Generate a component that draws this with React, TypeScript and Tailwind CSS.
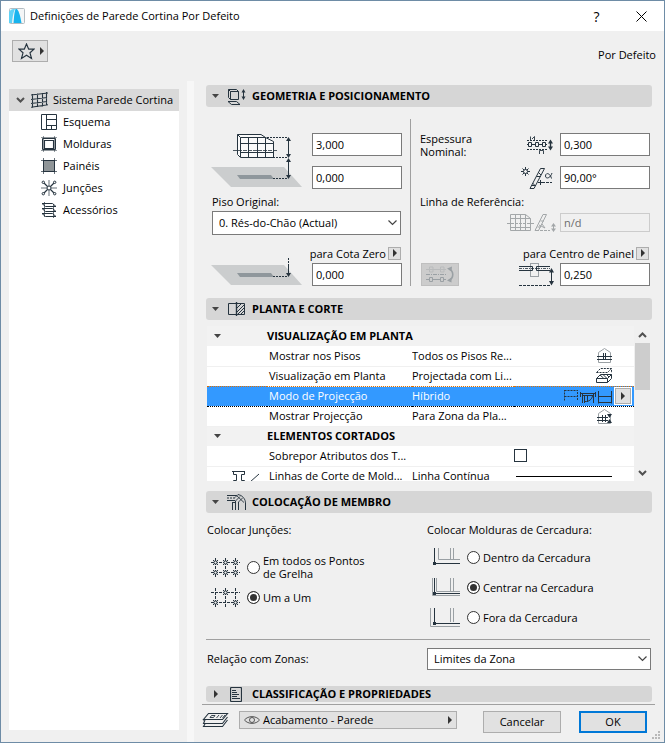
import React from "react";

const INK = "#26343f";
const GREY = "#9aa0a4";

type SvgProps = {
  w: number;
  h: number;
  color?: string;
  className?: string;
  children: React.ReactNode;
};

function Glyph({ w, h, color = INK, className = "", children }: SvgProps) {
  return (
    <svg
      width={w}
      height={h}
      viewBox={`0 0 ${w} ${h}`}
      fill="none"
      stroke={color}
      strokeWidth={1}
      aria-hidden="true"
      className={`shrink-0 ${className}`}
    >
      {children}
    </svg>
  );
}

/* ---------- small shared marks ---------- */

const ArrowRight = () => (
  <Glyph w={4} h={8} className="inline-block">
    <path d="M0 0L4 4L0 8Z" fill="#333" stroke="none" />
  </Glyph>
);

const ArrowDown = () => (
  <Glyph w={7} h={4}>
    <path d="M0 0H7L3.500 4Z" fill="#444" stroke="none" />
  </Glyph>
);

const Chevron = ({ up = false }: { up?: boolean }) => (
  <Glyph w={9} h={6}>
    <path d={up ? "M1 5L4.500 1.500L8 5" : "M1 1L4.500 4.500L8 1"} stroke="#505050" strokeWidth={2} />
  </Glyph>
);

/* ---------- tree icons ---------- */

const WallIcon = () => (
  <Glyph w={17} h={16}>
    <path d="M1.500 2V16M6.500 1.500V15M11.500 1V14.500M15.500 0V13.500M0 3L17 1M0 7.500L16 5.500M0 11.500L16 9.500M0 15.200L17 12.700" strokeWidth={1.1} />
  </Glyph>
);

const SchemeIcon = () => (
  <Glyph w={16} h={16}>
    <path d="M.5 .5H15.500V15.500H.5ZM5.500 0V16M5.500 5.500H15.500M5.500 11.500H15.500M10.500 11.500V16" />
  </Glyph>
);

const FrameIcon = () => (
  <Glyph w={16} h={16}>
    <path d="M1.500 2.500H14.500V13.500H1.500Z" />
    <path d="M3.500 4.500H12.500V12.500H3.500Z" strokeWidth={1.1} />
    <path d="M2.500 0V16M13.500 0V16M0 1.500H16M0 14.500H16" strokeWidth={0.5} />
  </Glyph>
);

const PanelIcon = () => (
  <Glyph w={16} h={16}>
    <rect x="2.500" y="2.500" width="11" height="11" fill="#8f9598" />
    <path d="M2.500 0V16M13.500 0V16M0 2.500H16M0 13.500H16" strokeWidth={0.7} />
  </Glyph>
);

const JunctionIcon = () => (
  <Glyph w={16} h={16}>
    <path d="M8 0V16M0 8H16" strokeWidth={0.7} />
    <path d="M3 3L13 13M13 3L3 13" strokeWidth={1.2} />
    <circle cx="8" cy="8" r="2" fill="#fff" />
    <circle cx="2.300" cy="2.300" r="1.200" fill="#fff" />
    <circle cx="13.700" cy="2.300" r="1.200" fill="#fff" />
    <circle cx="2.300" cy="13.700" r="1.200" fill="#fff" />
    <circle cx="13.700" cy="13.700" r="1.200" fill="#fff" />
  </Glyph>
);

const AccessoryIcon = () => (
  <Glyph w={16} h={16}>
    <path d="M3.500 0V15M12.500 2V16" strokeWidth={0.7} />
    <path d="M1 1.500H11.500L15 4.500H4.500ZM1 6.500H11.500L15 9.500H4.500ZM1 11.500H11.500L15 14.500H4.500Z" />
  </Glyph>
);

/* ---------- section icons ---------- */

const GeometryIcon = () => (
  <Glyph w={19} h={17}>
    <path d="M1.500 1.500H9.500L11.500 3.500V11.500H3.500L1.500 9.500ZM3.500 11.500V3.500H11.500M1.500 1.500L3.500 3.500" />
    <path d="M1 13.500H9.500L13 16.500H4.500Z" />
    <path d="M16.500 3V10" />
    <path d="M14.500 4.500L16.500 1L18.500 4.500ZM14.500 8.500L16.500 12L18.500 8.500Z" fill={INK} stroke="none" />
  </Glyph>
);

const PlanIcon = () => (
  <Glyph w={18} h={14} className="ml-px">
    <path d="M4.500 1.500H.5V12.500H4.500" />
    <path d="M4 1.500H16.500V12.500H4" />
    <path d="M8.500 0V14" strokeWidth={1.4} />
    <path d="M9 6L13 2M9 10L16 3M10 12L16 6M13 12L16 9" />
  </Glyph>
);

const MemberIcon = () => (
  <Glyph w={19} h={16}>
    <path d="M0 1.500H9M0 6.500H8M5 8.500H9" />
    <path d="M0 4H9" strokeDasharray="2 1" />
    <path d="M5.500 8V16M8.500 7V16M11.500 8V16M18.500 9V16" />
    <path d="M8 3.500L11 .5L14 1.500C17 3.500 18.500 6 18.500 9M8.500 7L13 2.500M11.500 8L15.500 4M9 1L17 8.500" strokeWidth={0.9} />
  </Glyph>
);

const DocIcon = () => (
  <Glyph w={12} h={15} className="ml-[3px]">
    <rect x=".5" y=".5" width="11" height="14" rx="1" strokeWidth={1.200} />
    <path d="M2 3.500H6M2 5.500H7M2 7.500H9M2 9.500H7M2 11.500H10" />
  </Glyph>
);

/* ---------- geometry drawings ---------- */

const FloorPlate = ({ y }: { y: number }) => (
  <g stroke="none">
    <path d={`M0 ${y}H73L91 ${y + 20}H20Z`} fill="#cbcdce" />
    <path d={`M26 ${y + 8}H60L63 ${y + 12}H29Z`} fill="#8f979c" />
  </g>
);

const HeightDrawing = () => (
  <Glyph w={92} h={56}>
    <FloorPlate y={34} />
    <path d="M26.500 1.500H50L54.500 4.500L62.500 8.500V24.500H29.500L26.500 21.500Z" fill="#fafafa" />
    <path d="M29.500 24V4.500H54.500M26.500 1.500L29.500 4.500M37.500 4.500V24M46.500 4.500V24M54.500 4.500V24M29.500 10.500H62M29.500 19.500H62" />
    <path d="M22 17.500H66" strokeDasharray="4 1" strokeWidth={0.8} />
    <path d="M56 4.500H77M62 24.500H77M62 45.500H77" strokeDasharray="2 1" />
    <path d="M77.500 6V24M77.500 27V45" />
    <path d="M75 8L77.500 4L80 8ZM75 21L77.500 25L80 21ZM75 29L77.500 25L80 29ZM75 42L77.500 46L80 42Z" fill={INK} stroke="none" />
  </Glyph>
);

const ZeroDrawing = () => (
  <Glyph w={92} h={28}>
    <FloorPlate y={7} />
    <path d="M62 18.500H76" strokeDasharray="2 1" />
    <path d="M77.500 0V6" strokeDasharray="2 1" />
    <path d="M77.500 6V16" />
    <path d="M75 15L77.500 19L80 15Z" fill={INK} stroke="none" />
  </Glyph>
);

const ThicknessDrawing = () => (
  <Glyph w={27} h={20}>
    <path d="M0 5.500H21M0 14.500H20" strokeDasharray="2 1" />
    <path d="M3.500 5V1.500M5 4L7.500 1.500V5M12.500 19V15.500H16.500V19" strokeWidth={0.9} />
    <path d="M0 9.500H20" />
    <path d="M1.500 7.500H4.500V11.500H1.500ZM8.500 7.500H11.500V11.500H8.500ZM15.500 7.500H18.500V11.500H15.500Z" fill="#f0f0f0" />
    <path d="M23.500 7V13" strokeWidth={1.4} />
    <path d="M21 8.500L23.500 4.500L26 8.500ZM21 11.500L23.500 15.500L26 11.500Z" fill={INK} stroke="none" />
  </Glyph>
);

const AngleDrawing = () => (
  <Glyph w={32} h={22}>
    <circle cx="4.500" cy="4.500" r="2" />
    <path d="M4.500 0V2.500M4.500 6.500V9M0 4.500H2.500M6.500 4.500H9M1.500 1.500L3 3M6 6L7.500 7.500M7.500 1.500L6 3M3 6L1.500 7.500" />
    <path d="M9 21.500L19.500 1.500H23.500L13 21.500ZM10.500 18.500H14.500M11.500 16L14 18.500M15.500 9.500H19.500M17.500 5.500L20 8" />
    <path d="M17 15.500H31" strokeDasharray="3 1" />
    <path d="M19.500 13V18M17 15.500H22" />
    <path d="M31 6C29 12 24.500 12 24.500 9C24.500 5.500 29 5.500 30.500 11.500" />
  </Glyph>
);

const ReferenceDrawing = () => (
  <Glyph w={49} h={19} color="#a3a7a9">
    <path d="M3.500 1.500H18.500L23.500 5.500V17.500H3.500ZM8.500 1.500V17M13.500 1.500V17M18.500 1.500V17M3.500 5.500H23.500M3.500 14.500H23.500" />
    <path d="M0 10.500H27M29 17.500H43" strokeDasharray="3 1" />
    <path d="M28 17.500L36 1.500H39.500L31.500 17.500ZM30.500 14H34M33.500 8H37M35 11L38 15L32 12" />
    <path d="M46.500 13V17" />
    <path d="M44 13.500L46.500 10L49 13.500ZM44 15.500L46.500 19L49 15.500Z" fill="#a3a7a9" stroke="none" />
  </Glyph>
);

const CenterDrawing = () => (
  <Glyph w={36} h={23}>
    <rect x="11.500" y=".5" width="8" height="13" stroke={GREY} />
    <path d="M0 3.500H13.500V7.500H0M31 3.500H17.500V7.500H31" />
    <path d="M0 5.500H31" strokeDasharray="3 1 1 1" strokeWidth={0.8} />
    <path d="M0 22.500H32" strokeDasharray="3 1" />
    <path d="M32.500 8V20" />
    <path d="M30 9.500L32.500 5L35 9.500ZM30 18L32.500 22.500L35 18Z" fill={INK} stroke="none" />
  </Glyph>
);

const FlipDrawing = () => (
  <Glyph w={28} h={17} color={GREY}>
    <path d="M0 3.500H20M3.500 1V6H7V1ZM14.500 1V6H18V1Z" stroke="#b9bbbc" />
    <path d="M0 8.500H21" strokeDasharray="4 1 1 1" />
    <path d="M0 13.500H20" />
    <path d="M3.500 11.500H6.500V15.500H3.500ZM14.500 11.500H17.500V15.500H14.500Z" fill="#ccc" />
    <path d="M23 3C28 5 28 12 23 14.500" strokeWidth={1.600} />
    <path d="M21 2.500L26 0.500L25.500 5.500ZM21 14.500L25.500 16.500L25.500 11.500Z" fill={GREY} stroke="none" />
  </Glyph>
);

/* ---------- property list icons ---------- */

const House = () => <path d="M1.500 14.500V4.500L7.500 .5L13.500 4.500V14.500Z" stroke={GREY} />;

const StoriesIcon = () => (
  <Glyph w={15} h={15}>
    <House />
    <path d="M0 8.500H15M0 11.500H15M6.500 5V12M8.500 5V12" />
  </Glyph>
);

const RangeIcon = () => (
  <Glyph w={15} h={15}>
    <House />
    <path d="M0 8.500H11M0 11.500H11M5.500 6V13M8.500 6V13" />
    <path d="M10 5H15L12.500 9ZM10 14H15L12.500 10Z" fill={INK} stroke="none" />
  </Glyph>
);

const ProjectionIcon = () => (
  <Glyph w={16} h={16}>
    <path d="M.5 4.500H11.500L15.500 .5M.5 4.500L4.500 .5H15.500V5" strokeDasharray="2 1" />
    <path d="M.5 14.500V10.500L4.500 6.500H15.500V10.500L11.500 14.500ZM.5 10.500H11.500L15.500 6.500M11.500 10.500V14.500M4 7L7.500 10M7.500 7L10.500 10M11 7L13 9" />
  </Glyph>
);

const HybridIcons = () => (
  <Glyph w={48} h={15}>
    <path d="M.5 1.500H14M.5 7.500H14M.5 11.500V1M13.500 11V1" strokeDasharray="2 1" />
    <path d="M17 4.500H32M19 6.500H30M16.500 3V8M18.500 5V14M20.500 6V14M29.500 5V14M31.500 3V8M21 12.500C25 13 28 10 28.500 7M23.500 7V13" />
    <path d="M34.500 2V14.500M47.500 2V14.500M34.500 7.500H47.500M34.500 13.500H47.500" />
  </Glyph>
);

const CutLineIcons = () => (
  <Glyph w={28} h={13}>
    <path d="M0 1.500H13M1.500 1.500V4.500H4.500V10.500H1.500V13M12.500 1.500V4.500H9.500V10.500H12.500V13M18 12L27 4" />
  </Glyph>
);

/* ---------- member placement icons ---------- */

const Star = ({ x, y }: { x: number; y: number }) => (
  <g strokeWidth={1}>
    <circle cx={x} cy={y} r="1.600" fill="#f0f0f0" />
    <path d={`M${x - 2.5} ${y - 2.5}L${x - 1} ${y - 1}M${x + 1} ${y + 1}L${x + 2.5} ${y + 2.5}M${x + 2.5} ${y - 2.5}L${x + 1} ${y - 1}M${x - 1} ${y + 1}L${x - 2.5} ${y + 2.5}`} />
  </g>
);

const GridPoints = ({ points }: { points: [number, number][] }) => (
  <Glyph w={29} h={20}>
    <path d="M0 5.500H29M0 15.500H29" strokeDasharray="3 1" />
    <path d="M4.500 1V20M14.500 1V20M24.500 1V20" strokeDasharray="3 1" />
    {points.map(([x, y]) => (
      <Star key={`${x}-${y}`} x={x} y={y} />
    ))}
  </Glyph>
);

const ALL_POINTS: [number, number][] = [[4.5, 5.5], [14.5, 5.5], [24.5, 5.5], [4.5, 15.5], [14.5, 15.5], [24.5, 15.5]];
const ALT_POINTS: [number, number][] = [[14.5, 5.5], [4.5, 15.5], [24.5, 15.5]];

const EdgeIcon = ({ kind }: { kind: "in" | "mid" | "out" }) => (
  <Glyph w={30} h={20}>
    {kind === "in" && <path d="M8.500 1V12.500H30M20.500 1V12M23.500 1V12" stroke={GREY} />}
    {kind === "mid" && (
      <path d="M2.500 1V18.500H30M6.500 1V14.500H30M20.500 1V14M23.500 1V14" stroke={GREY} />
    )}
    {kind === "out" && <path d="M.5 1V19.500H30M20.500 1V15M23.500 1V15" stroke={GREY} />}
    <path d="M4.500 1V16.500H30" />
    <rect x="3" y="15" width="3" height="3" fill={INK} stroke="none" />
  </Glyph>
);

/* ---------- building blocks ---------- */

const HEADING = "flex items-center rounded-[3px] bg-[#d6d6d6] text-left text-[11px] font-bold";

function SectionHeader({ title, icon, closed = false }: { title: string; icon: React.ReactNode; closed?: boolean }) {
  return (
    <button type="button" aria-expanded={!closed} className={`${HEADING} w-full shrink-0 ${closed ? "h-4" : "h-[22px]"}`}>
      <span className="flex w-5 pl-[6px]">{closed ? <span className="flex pl-[2px]"><ArrowRight /></span> : <ArrowDown />}</span>
      <span className="flex w-[26px] justify-start pl-px">{icon}</span>
      <h2 className="whitespace-nowrap">{title}</h2>
    </button>
  );
}

function NumberBox({ label, value, disabled = false }: { label: string; value: string; disabled?: boolean }) {
  return (
    <input
      aria-label={label}
      defaultValue={value}
      disabled={disabled}
      className={`w-[90px] shrink-0 border px-[3px] ${
        disabled ? "h-[19px] border-[#ccc] bg-[#f0f0f0] text-[#6d6d6d]" : "h-[23px] border-[#7a7a7a] bg-white"
      }`}
    />
  );
}

function MenuButton({ label }: { label: string }) {
  return (
    <button type="button" aria-label={label} className="mb-[2px] flex h-[13px] w-[13px] shrink-0 items-center justify-center border border-[#adadad] bg-[#e1e1e1]">
      <ArrowRight />
    </button>
  );
}

function DropDown({ id, value, className }: { id: string; value: string; className: string }) {
  return (
    <div className={`relative ${className}`}>
      <select id={id} className="h-full w-full appearance-none border border-[#7a7a7a] bg-white pl-[6px] pr-5">
        <option>{value}</option>
      </select>
      <span className="pointer-events-none absolute inset-y-0 right-1 flex items-center">
        <Glyph w={9} h={6}>
          <path d="M.5 .5L4.500 4.500L8.500 .5" stroke="#444" strokeWidth={1.200} />
        </Glyph>
      </span>
    </div>
  );
}

function Choice({ name, icon, checked = false, children }: { name: string; icon: React.ReactNode; checked?: boolean; children: React.ReactNode }) {
  return (
    <label className="flex h-[30px] items-center whitespace-nowrap leading-[13px]">
      {icon}
      <input
        type="radio"
        name={name}
        defaultChecked={checked}
        className="ml-[7px] mr-[3px] h-[13px] w-[13px] shrink-0 appearance-none rounded-full border border-[#333] bg-white checked:bg-[#333] checked:shadow-[inset_0_0_0_2px_#fff]"
      />
      <span>{children}</span>
    </label>
  );
}

/* ---------- tree ---------- */

const TREE = [
  { label: "Esquema", icon: <SchemeIcon /> },
  { label: "Molduras", icon: <FrameIcon /> },
  { label: "Painéis", icon: <PanelIcon /> },
  { label: "Junções", icon: <JunctionIcon /> },
  { label: "Acessórios", icon: <AccessoryIcon /> },
];

function Tree() {
  return (
    <nav className="mb-3 mt-2 w-[170px] shrink-0 bg-white">
      <a href="#sistema" className="flex h-[22px] items-center bg-[#d9d9d9] pl-[7px]">
        <Chevron />
        <span className="ml-[6px] mr-[5px]"><WallIcon /></span>
        <span className="whitespace-nowrap">Sistema Parede Cortina</span>
      </a>
      <ul>
        {TREE.map((item) => (
          <li key={item.label}>
            <a href="#item" className="flex h-[22px] items-center gap-[6px] pl-8">
              {item.icon}
              <span>{item.label}</span>
            </a>
          </li>
        ))}
      </ul>
    </nav>
  );
}

/* ---------- sections ---------- */

function Geometry() {
  return (
    <div className="flex pb-3 pt-3">
      <div className="flex w-[205px] shrink-0 flex-col border-r border-[#a0a0a0] pl-[5px] pr-2 pt-[14px]">
        <div className="flex items-start justify-between">
          <HeightDrawing />
          <div className="flex flex-col gap-[10px]">
            <NumberBox label="Altura" value="3,000" />
            <NumberBox label="Elevação" value="0,000" />
          </div>
        </div>
        <label htmlFor="piso" className="mt-[5px] pl-px leading-4">Piso Original:</label>
        <DropDown id="piso" value="0. Rés-do-Chão (Actual)" className="mx-px mt-px h-6" />
        <div className="mt-[10px] flex h-[18px] items-center justify-end gap-[2px] pr-px">
          <span>para Cota Zero</span>
          <MenuButton label="Escolher cota" />
        </div>
        <div className="flex h-[23px] items-end justify-between">
          <ZeroDrawing />
          <NumberBox label="para Cota Zero" value="0,000" />
        </div>
      </div>
      <div className="flex flex-1 flex-col pl-[9px] pr-[2px] pt-[14px]">
        <div className="flex h-[23px] items-center gap-[6px]">
          <span className="mr-auto leading-[13px]">Espessura<br />Nominal:</span>
          <ThicknessDrawing />
          <NumberBox label="Espessura Nominal" value="0,300" />
        </div>
        <div className="mt-[10px] flex items-center justify-end gap-[7px]">
          <AngleDrawing />
          <NumberBox label="Ângulo" value="90,00°" />
        </div>
        <span className="mt-[5px] leading-4">Linha de Referência:</span>
        <div className="mt-[3px] flex items-center justify-end gap-1">
          <ReferenceDrawing />
          <NumberBox label="Linha de Referência" value="n/d" disabled />
        </div>
        <div className="mt-[13px] flex h-[18px] items-center justify-end gap-[2px] pr-px">
          <span>para Centro de Painel</span>
          <MenuButton label="Escolher posição" />
        </div>
        <div className="flex h-[23px] items-center gap-[5px]">
          <button type="button" aria-label="Inverter" disabled className="ml-px mr-auto flex h-[23px] w-[38px] items-center justify-center border border-[#bfbfbf] bg-[#ccc]">
            <FlipDrawing />
          </button>
          <CenterDrawing />
          <NumberBox label="para Centro de Painel" value="0,250" />
        </div>
      </div>
    </div>
  );
}

function GroupRow({ title }: { title: string }) {
  return (
    <tr className="h-5 bg-[#f2f2f2]">
      <td className="pl-[7px]"><ArrowDown /></td>
      <th colSpan={3} scope="colgroup" className="text-left font-bold">{title}</th>
    </tr>
  );
}

function PropertyRow({ name, value = "", lead, children, selected = false }: { name: string; value?: string; lead?: React.ReactNode; children: React.ReactNode; selected?: boolean }) {
  return (
    <tr
      aria-selected={selected}
      className={`h-5 ${
        selected
          ? "border-b border-t border-dotted border-b-black border-t-[#e07000] bg-[#3399ff] text-white"
          : "border-b border-[#f0f0f0] bg-white has-[+[aria-selected=true]]:border-b-0"
      }`}
    >
      <td className="pl-[25px]">{lead}</td>
      <th scope="row" className="truncate pl-[2px] text-left font-normal">{name}</th>
      <td className="truncate">{value}</td>
      <td className={selected ? "pr-[3px]" : "pr-[22px]"}>
        <div className="flex h-[18px] items-center justify-end">{children}</div>
      </td>
    </tr>
  );
}

function PropertyList() {
  return (
    <div className="mb-[10px] ml-px mr-[2px] mt-[6px] flex h-[155px]">
      <div className="min-w-0 flex-1 overflow-hidden">
        <table className="w-full table-fixed border-collapse leading-[18px]">
          <colgroup>
            <col className="w-[60px]" />
            <col className="w-[145px]" />
            <col className="w-[102px]" />
            <col />
          </colgroup>
          <tbody>
            <GroupRow title="VISUALIZAÇÃO EM PLANTA" />
            <PropertyRow name="Mostrar nos Pisos" value="Todos os Pisos Re..."><StoriesIcon /></PropertyRow>
            <PropertyRow name="Visualização em Planta" value="Projectada com Li..."><ProjectionIcon /></PropertyRow>
            <PropertyRow name="Modo de Projecção" value="Híbrido" selected>
              <HybridIcons />
              <button type="button" aria-label="Escolher modo de projecção" className="ml-[3px] flex h-4 w-4 shrink-0 items-center justify-center border border-[#adadad] bg-[#e1e1e1] outline-1 outline-white">
                <ArrowRight />
              </button>
            </PropertyRow>
            <PropertyRow name="Mostrar Projecção" value="Para Zona da Pla..."><RangeIcon /></PropertyRow>
            <GroupRow title="ELEMENTOS CORTADOS" />
            <PropertyRow name="Sobrepor Atributos dos T...">
              <input type="checkbox" aria-label="Sobrepor Atributos" className="mr-auto h-[13px] w-[13px] appearance-none border border-[#26343f] bg-white" />
            </PropertyRow>
            <PropertyRow name="Linhas de Corte de Mold..." value="Linha Contínua" lead={<CutLineIcons />}>
              <span className="h-px w-24 bg-black" />
            </PropertyRow>
          </tbody>
        </table>
      </div>
      <div className="ml-px flex w-[15px] flex-col items-center">
        <button type="button" aria-label="Subir" className="flex h-[17px] items-center"><Chevron up /></button>
        <div className="h-[47px] w-full bg-[#cdcdcd]" />
        <button type="button" aria-label="Descer" className="mt-auto flex h-[17px] items-center"><Chevron /></button>
      </div>
    </div>
  );
}

function Members() {
  return (
    <div className="pt-[9px]">
      <div className="flex">
        <fieldset className="w-[220px] shrink-0 pl-px">
          <legend className="mb-[14px] leading-4">Colocar Junções:</legend>
          <div className="pl-1">
            <Choice name="juncoes" icon={<GridPoints points={ALL_POINTS} />}>Em todos os Pontos<br />de Grelha</Choice>
            <Choice name="juncoes" icon={<GridPoints points={ALT_POINTS} />} checked>Um a Um</Choice>
          </div>
        </fieldset>
        <fieldset className="flex-1 pl-px">
          <legend className="mb-1 whitespace-nowrap leading-4">Colocar Molduras de Cercadura:</legend>
          <div className="pl-[3px]">
            <Choice name="molduras" icon={<EdgeIcon kind="in" />}>Dentro da Cercadura</Choice>
            <Choice name="molduras" icon={<EdgeIcon kind="mid" />} checked>Centrar na Cercadura</Choice>
            <Choice name="molduras" icon={<EdgeIcon kind="out" />}>Fora da Cercadura</Choice>
          </div>
        </fieldset>
      </div>
      <hr className="mr-[2px] mt-[7px] border-[#a0a0a0]" />
      <div className="mb-4 mr-px mt-2 flex items-center pl-px">
        <label htmlFor="zonas" className="w-[220px]">Relação com Zonas:</label>
        <DropDown id="zonas" value="Limites da Zona" className="h-[22px] flex-1" />
      </div>
    </div>
  );
}

function Footer() {
  return (
    <footer className="ml-2 mr-[9px] mt-[2px] flex items-start border-t border-[#a0a0a0] pt-[6px]">
      <Glyph w={27} h={16} className="mt-px">
        <path d="M6.500 1.500H25.500L20.500 7.500H1.500ZM1.500 7.500V8.500M3 8L1.500 11.500H20.500L25.500 5M3 12L1.500 14.500H20.500L25.500 8" strokeWidth={1.1} />
        <path d="M9.500 3.500H13L11.500 5.500H8ZM14.500 6L17 3M18 6L20.500 3M20.500 6L23 3" strokeWidth={0.9} />
      </Glyph>
      <button type="button" className="ml-[10px] flex h-[18px] min-w-0 flex-1 items-center border border-[#adadad] bg-[#e1e1e1] pl-1 pr-1">
        <Glyph w={16} h={10}>
          <path d="M.5 5C4 .5 12 .5 15.500 5C12 9.500 4 9.500 .5 5Z" stroke="#555" />
          <circle cx="8" cy="5" r="2.500" stroke="#555" />
        </Glyph>
        <span className="ml-[3px] mr-auto whitespace-nowrap">Acabamento - Parede</span>
        <ArrowRight />
      </button>
      <button type="button" className="ml-[26px] h-[22px] w-[78px] border border-[#adadad] bg-[#e1e1e1]">Cancelar</button>
      <button type="button" className="ml-[18px] mr-2 h-[22px] w-[68px] border-2 border-[#0078d7] bg-[#e1e1e1]">OK</button>
    </footer>
  );
}

export default function App() {
  return (
    <div className="relative flex min-h-screen flex-col border border-[#6e8ca6] bg-[#f0f0f0] font-['Open_Sans','Noto_Sans',sans-serif] text-[11px] text-black">
      <header className="flex h-[30px] items-center bg-white pl-2">
        <svg width="16" height="16" viewBox="0 0 16 16" aria-hidden="true">
          <rect x=".5" y=".5" width="15" height="15" rx="1" fill="#f4f6f7" stroke="#b3bcc2" />
          <path d="M0 15V4C1 2 3 .5 6 1C4 5 3.500 10 3 15Z" fill="#5fd3f7" />
          <path d="M4.500 15C5 10 5 5 6.500 1H8C10.500 4 11.500 9 12.500 15Z" fill="#18b4ee" />
        </svg>
        <h1 className="ml-[5px]">Definições de Parede Cortina Por Defeito</h1>
        <button type="button" aria-label="Ajuda" className="ml-auto w-[45px] text-[14px]">?</button>
        <button type="button" aria-label="Fechar" className="flex w-[45px] justify-center">
          <Glyph w={11} h={11} color="#000"><path d="M.5 .5L10.500 10.500M10.500 .5L.5 10.500" /></Glyph>
        </button>
      </header>
      <div className="flex h-[50px] items-start justify-between pl-[11px] pr-2 pt-[9px]">
        <button type="button" aria-label="Favoritos" className="flex h-[22px] w-9 items-center justify-between border border-[#adadad] bg-[#e1e1e1] pl-[5px] pr-[3px]">
          <Glyph w={17} h={17}>
            <path d="M8.500 1L10.700 6.200H16L12 9.800L13.500 15.500L8.500 12.300L3.500 15.500L5 9.800L1 6.200H6.300Z" strokeWidth={1.200} />
          </Glyph>
          <ArrowRight />
        </button>
        <span className="mt-[7px] leading-4">Por Defeito</span>
      </div>
      <div className="flex flex-1 pl-2">
        <Tree />
        <div className="ml-2 w-[7px] shrink-0 bg-[#f7f7f7]" />
        <div className="flex min-w-0 flex-1 flex-col">
          <main className="px-3 pt-1">
            <SectionHeader title="GEOMETRIA E POSICIONAMENTO" icon={<GeometryIcon />} />
            <Geometry />
            <SectionHeader title="PLANTA E CORTE" icon={<PlanIcon />} />
            <PropertyList />
            <SectionHeader title="COLOCAÇÃO DE MEMBRO" icon={<MemberIcon />} />
            <Members />
            <SectionHeader title="CLASSIFICAÇÃO E PROPRIEDADES" icon={<DocIcon />} closed />
          </main>
          <Footer />
        </div>
      </div>
      <svg className="absolute bottom-[2px] right-[3px]" width="9" height="9" viewBox="0 0 9 9" fill="#b8b8b8" aria-hidden="true">
        <path d="M6 0H8V2H6ZM3 3H5V5H3ZM6 3H8V5H6ZM0 6H2V8H0ZM3 6H5V8H3ZM6 6H8V8H6Z" />
      </svg>
    </div>
  );
}
